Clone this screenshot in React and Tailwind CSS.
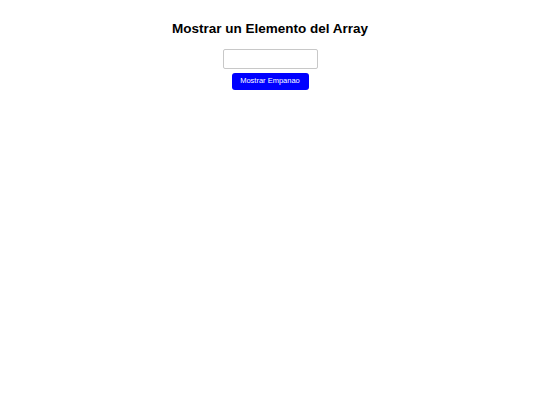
import React, { useState } from 'react';

const items = ['Empanada', 'Pizza', 'Taco', 'Arepa'];

const App = () => {
  const [index, setIndex] = useState('');
  const [result, setResult] = useState('');

  const show = () => {
    const item = items[Number(index)];
    setResult(item ? item : '');
  };

  return (
    <div className="min-h-screen bg-white flex flex-col items-center pt-[22px] font-['Liberation_Sans',Arial,sans-serif] text-black">
      <h2 className="text-[13.5px] leading-none font-bold">Mostrar un Elemento del Array</h2>
      <input
        type="text"
        value={index}
        onChange={(e) => setIndex(e.target.value)}
        className="mt-[13px] w-[95px] h-[20px] border border-[#c8c8c8] rounded-[2px] px-1 text-[9px] outline-none"
      />
      <button
        onClick={show}
        className="mt-[4px] w-[77px] h-[17px] bg-[#0000ff] text-white text-[7.5px] rounded-[3px] leading-none"
      >
        Mostrar Empanao
      </button>
      {result && <p className="mt-2 text-[9px]">{result}</p>}
    </div>
  );
};

export default App;
